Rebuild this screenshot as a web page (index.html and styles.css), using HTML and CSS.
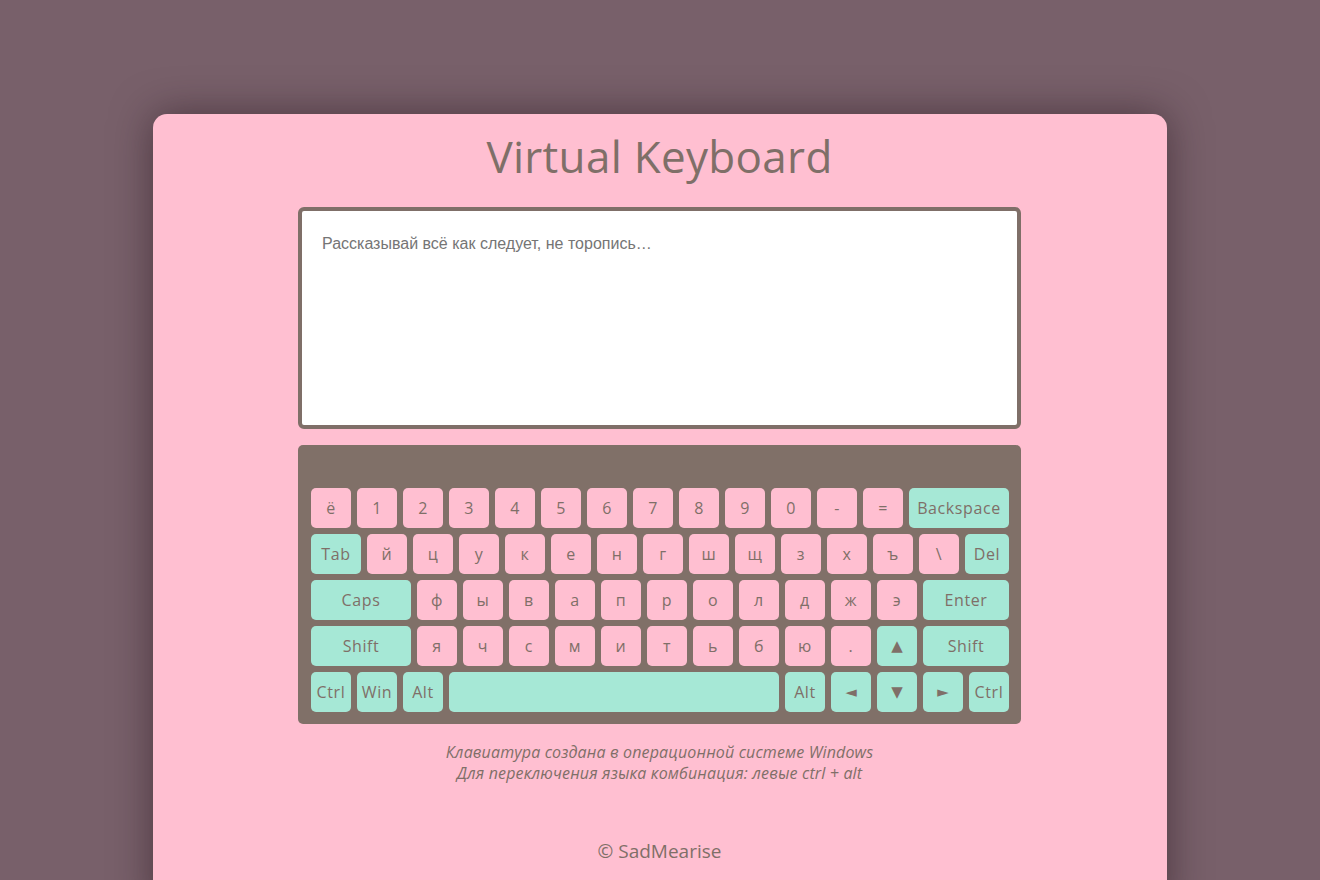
FILE: index.html
```html
<!DOCTYPE html>
<html lang="ru">
<head>
<meta charset="utf-8">
<title>Virtual Keyboard</title>
<link rel="stylesheet" href="styles.css">
</head>
<body>
<main class="card">
  <h1 class="title">Virtual Keyboard</h1>
  <textarea class="input" placeholder="Рассказывай всё как следует, не торопись…"></textarea>
  <div class="keyboard">
    <div class="row">
      <div class="key">ё</div><div class="key">1</div><div class="key">2</div><div class="key">3</div><div class="key">4</div><div class="key">5</div><div class="key">6</div><div class="key">7</div><div class="key">8</div><div class="key">9</div><div class="key">0</div><div class="key">-</div><div class="key">=</div><div class="key fn w100">Backspace</div>
    </div>
    <div class="row">
      <div class="key fn w50">Tab</div><div class="key">й</div><div class="key">ц</div><div class="key">у</div><div class="key">к</div><div class="key">е</div><div class="key">н</div><div class="key">г</div><div class="key">ш</div><div class="key">щ</div><div class="key">з</div><div class="key">х</div><div class="key">ъ</div><div class="key">\</div><div class="key fn w44">Del</div>
    </div>
    <div class="row">
      <div class="key fn w100">Caps</div><div class="key">ф</div><div class="key">ы</div><div class="key">в</div><div class="key">а</div><div class="key">п</div><div class="key">р</div><div class="key">о</div><div class="key">л</div><div class="key">д</div><div class="key">ж</div><div class="key">э</div><div class="key fn w86">Enter</div>
    </div>
    <div class="row">
      <div class="key fn w100">Shift</div><div class="key">я</div><div class="key">ч</div><div class="key">с</div><div class="key">м</div><div class="key">и</div><div class="key">т</div><div class="key">ь</div><div class="key">б</div><div class="key">ю</div><div class="key">.</div><div class="key fn arrow">▲</div><div class="key fn w86">Shift</div>
    </div>
    <div class="row">
      <div class="key fn">Ctrl</div><div class="key fn">Win</div><div class="key fn">Alt</div><div class="key fn space"></div><div class="key fn">Alt</div><div class="key fn arrow">◄</div><div class="key fn arrow">▼</div><div class="key fn arrow">►</div><div class="key fn">Ctrl</div>
    </div>
  </div>
  <p class="note">Клавиатура создана в операционной системе Windows<br>Для переключения языка комбинация: левые ctrl + alt</p>
  <footer class="footer">© SadMearise</footer>
</main>
</body>
</html>
```

FILE: styles.css
```css
html, body {
  margin: 0;
  padding: 0;
}
body {
  background: #78606a;
  font-family: "Open Sans", "Noto Sans", sans-serif;
  color: #7f6f68;
  height: 880px;
  overflow: hidden;
}
.card {
  box-sizing: border-box;
  width: 1014px;
  margin: 114px auto 0;
  background: #ffbfd1;
  border-radius: 14px;
  box-shadow: 0 0 40px rgba(40, 20, 30, 0.55);
  padding: 16px 146px 40px 145px;
  display: flex;
  flex-direction: column;
  align-items: center;
  min-height: 800px;
}
.title {
  margin: 0 0 23px;
  font-weight: 400;
  font-size: 44px;
  line-height: 53px;
  letter-spacing: 0.3px;
  color: #7f6f68;
}
.input {
  box-sizing: border-box;
  width: 723px;
  height: 222px;
  border: 4px solid #7f6f68;
  border-radius: 6px;
  padding: 24px 20px 20px;
  font-family: "Liberation Sans", Arial, sans-serif;
  font-size: 16px;
  resize: none;
  outline: none;
  background: #fff;
  color: #333;
  margin: 1px 0 0;
  display: block;
}
.input::placeholder {
  color: #757575;
}
.keyboard {
  box-sizing: border-box;
  width: 723px;
  margin-top: 16px;
  background: #807068;
  border-radius: 5px;
  padding: 43px 12px 12px 13px;
  display: flex;
  flex-direction: column;
  gap: 6px;
}
.row {
  display: flex;
  gap: 6px;
}
.key {
  box-sizing: border-box;
  width: 40px;
  height: 40px;
  flex: none;
  background: #ffbfd1;
  border-radius: 5px;
  display: flex;
  align-items: center;
  justify-content: center;
  font-size: 16px;
  letter-spacing: 0.6px;
  color: #7f6f68;
  white-space: nowrap;
}
.fn {
  background: #a6e8d6;
}
.w100 { width: 100px; }
.w50 { width: 50px; }
.w44 { width: 44px; }
.w86 { width: 86px; }
.space { width: 330px; }
.arrow {
  font-family: "DejaVu Sans", sans-serif;
  font-size: 15px;
  letter-spacing: 0;
}
.note {
  margin: 18px 0 0;
  text-align: center;
  font-style: italic;
  font-size: 16px;
  line-height: 21px;
  letter-spacing: 0.15px;
  color: #7f6f68;
}
.footer {
  margin-top: 54px;
  font-size: 19px;
  color: #7f6f68;
}
```
